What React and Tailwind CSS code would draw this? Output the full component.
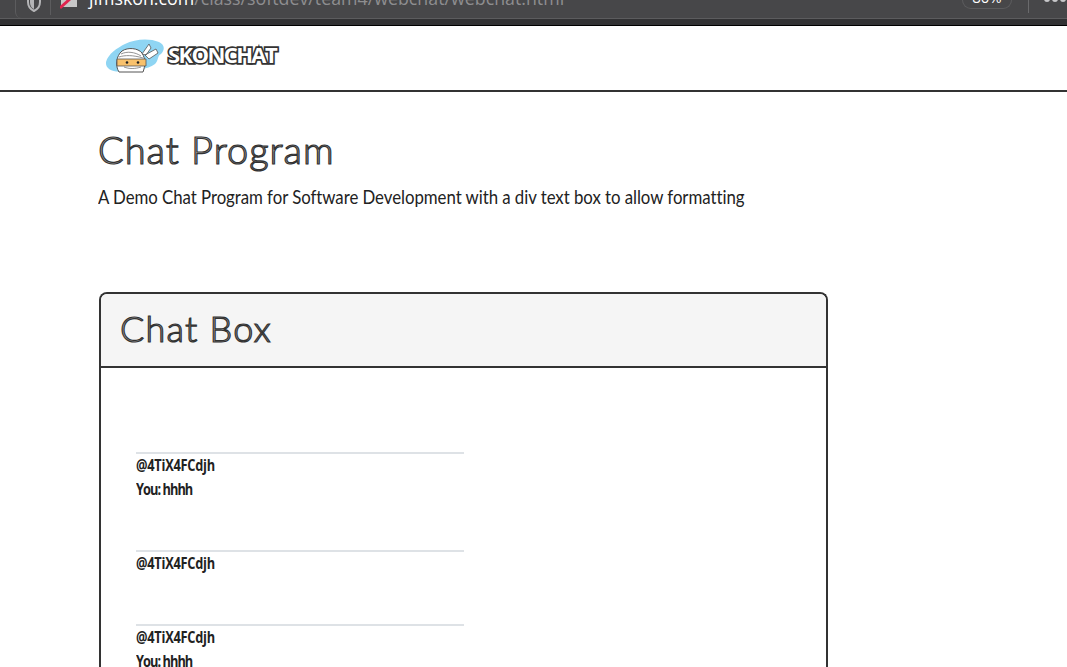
const Shield = () => (
  <svg width="14" height="18" viewBox="0 0 14 18" fill="none" className="shrink-0">
    <path d="M7 -6 L13 -4 V2 C13 6 11 9 7 11 C3 9 1 6 1 2 V-4 Z" stroke="#b4b4b6" strokeWidth="2" />
    <path d="M7 -4 V9 C4 8 3 5 3 2 V-3 Z" fill="#b4b4b6" />
  </svg>
)

const Favicon = () => (
  <svg width="17" height="11" viewBox="0 0 17 11" className="shrink-0 self-start">
    <rect x="1" y="0" width="16" height="8" fill="#c8c8c8" />
    <path d="M0 9 L10 0" stroke="#e0234e" strokeWidth="3" />
  </svg>
)

const Logo = () => (
  <svg width="60" height="38" viewBox="0 0 60 38" className="shrink-0">
    <path d="M1 24 C3 16 12 10 20 6 C30 1 44 0 54 4 C60 7 60 12 56 16 C52 18 54 22 50 26 C42 32 30 32 20 33 C10 35 0 32 1 24 Z" fill="#8fd5f3" />
    <path d="M14 34 C10 28 11 18 17 13 C23 9 33 10 37 15 C41 21 40 29 38 34 Z" fill="#fff" stroke="#555" strokeWidth="1" />
    <path d="M12 21 H41 V28 H12 Z" fill="#f8c16c" stroke="#555" strokeWidth="0.8" />
    <circle cx="22" cy="24.5" r="1.3" fill="#222" />
    <circle cx="33" cy="24.5" r="1.3" fill="#222" />
    <path d="M16 16 C22 13 30 14 36 18 M14 19 C20 17 28 17 38 20 M19 29 C24 31 30 31 36 29" stroke="#777" strokeWidth="0.8" fill="none" />
    <path d="M37 16 L44 6 L46 10 L41 17 Z M40 17 L51 11 L53 15 L44 21 Z" fill="#fff" stroke="#555" strokeWidth="0.8" />
  </svg>
)

const Message = ({ text }) => (
  <div className="w-[328px] mb-12 border-t-2 border-[#dee2e6] font-bold text-[16px] text-[#222] font-['Open_Sans',sans-serif]">
    <p className="h-6 leading-[22px] origin-left scale-x-[0.8] tracking-[-0.3px] whitespace-nowrap">@4TiX4FCdjh</p>
    {text && <p className="h-6 leading-[22px] origin-left scale-x-[0.8] tracking-[-1.2px] whitespace-nowrap">{text}</p>}
  </div>
)

export default function App() {
  return (
    <div className="h-[667px] overflow-hidden bg-white font-['Lato',sans-serif] text-[#222]">
      {/* browser toolbar, cut off by the top of the shot */}
      <div className="h-[26px] bg-[#323234] border-b border-black">
        <div className="h-[19px] bg-[#474749] border-b border-[#5c5c5e] flex items-end overflow-hidden pl-[15px]">
          <div className="flex-1 h-[19px] flex items-center gap-[9px] pl-[11px] border-l border-[#5c5c5e] rounded-bl-md">
            <Shield />
            <div className="w-px h-4 bg-[#5c5c5e] self-start" />
            <Favicon />
            <p className="self-start -mt-[14px] ml-[3px] whitespace-nowrap font-['Open_Sans',sans-serif] text-[17.8px] leading-[26px] text-[#8e8e90]">
              <span className="text-white">jimskon.com</span>/class/softdev/team4/webchat/webchat.html
            </p>
            <div className="ml-auto mr-[7px] w-[50px] h-[10px] rounded-b-[9px] border border-t-0 border-[#5c5c5e] overflow-hidden self-start flex justify-center">
              <span className="-mt-[13px] text-white text-[15px] leading-[22px] font-['Open_Sans',sans-serif]">80%</span>
            </div>
            <div className="w-px h-[14px] bg-[#6a6a6c] self-start" />
            <div className="flex gap-[2px] ml-[6px] mr-px self-start -mt-[3px]">
              <span className="w-[6px] h-[6px] rounded-full bg-[#c8c8ca]" />
              <span className="w-[6px] h-[6px] rounded-full bg-[#c8c8ca]" />
              <span className="w-[6px] h-[6px] rounded-full bg-[#c8c8ca]" />
            </div>
          </div>
        </div>
      </div>

      <nav className="h-[66px] border-b-2 border-[#333] pl-[105px] pt-[12px] flex items-start">
        <Logo />
        <span className="ml-[3px] mt-[2px] font-['Open_Sans',sans-serif] font-bold text-[22px] leading-7 tracking-[-1.6px] text-white [-webkit-text-stroke:3.4px_#333] [paint-order:stroke_fill]">
          SKONCHAT
        </span>
      </nav>

      <main className="pl-[98px] w-[828px]">
        <h1 className="mt-[29px] font-light text-[38px] leading-[56px] tracking-[1px] text-[#b0b0b0] [-webkit-text-stroke:1.2px_#333]">
          Chat Program
        </h1>
        <p className="mt-[6px] origin-left scale-x-[0.885] whitespace-nowrap text-[19px] leading-7 tracking-[-0.05px] text-[#222]">
          A Demo Chat Program for Software Development with a div text box to allow formatting
        </p>

        <section className="mt-[81px] ml-px border-2 border-b-0 border-[#333] rounded-t-[8px] overflow-hidden">
          <header className="h-[74px] bg-[#f5f5f5] border-b-2 border-[#333] pl-[19px] pt-[6px]">
            <h2 className="font-light text-[36px] leading-[56px] tracking-[1.2px] text-[#b0b0b0] [-webkit-text-stroke:1.2px_#333]">
              Chat Box
            </h2>
          </header>
          <div className="pt-[84px] pl-[35px] bg-white">
            <Message text="You: hhhh" />
            <Message />
            <Message text="You: hhhh" />
          </div>
        </section>
      </main>
    </div>
  )
}
